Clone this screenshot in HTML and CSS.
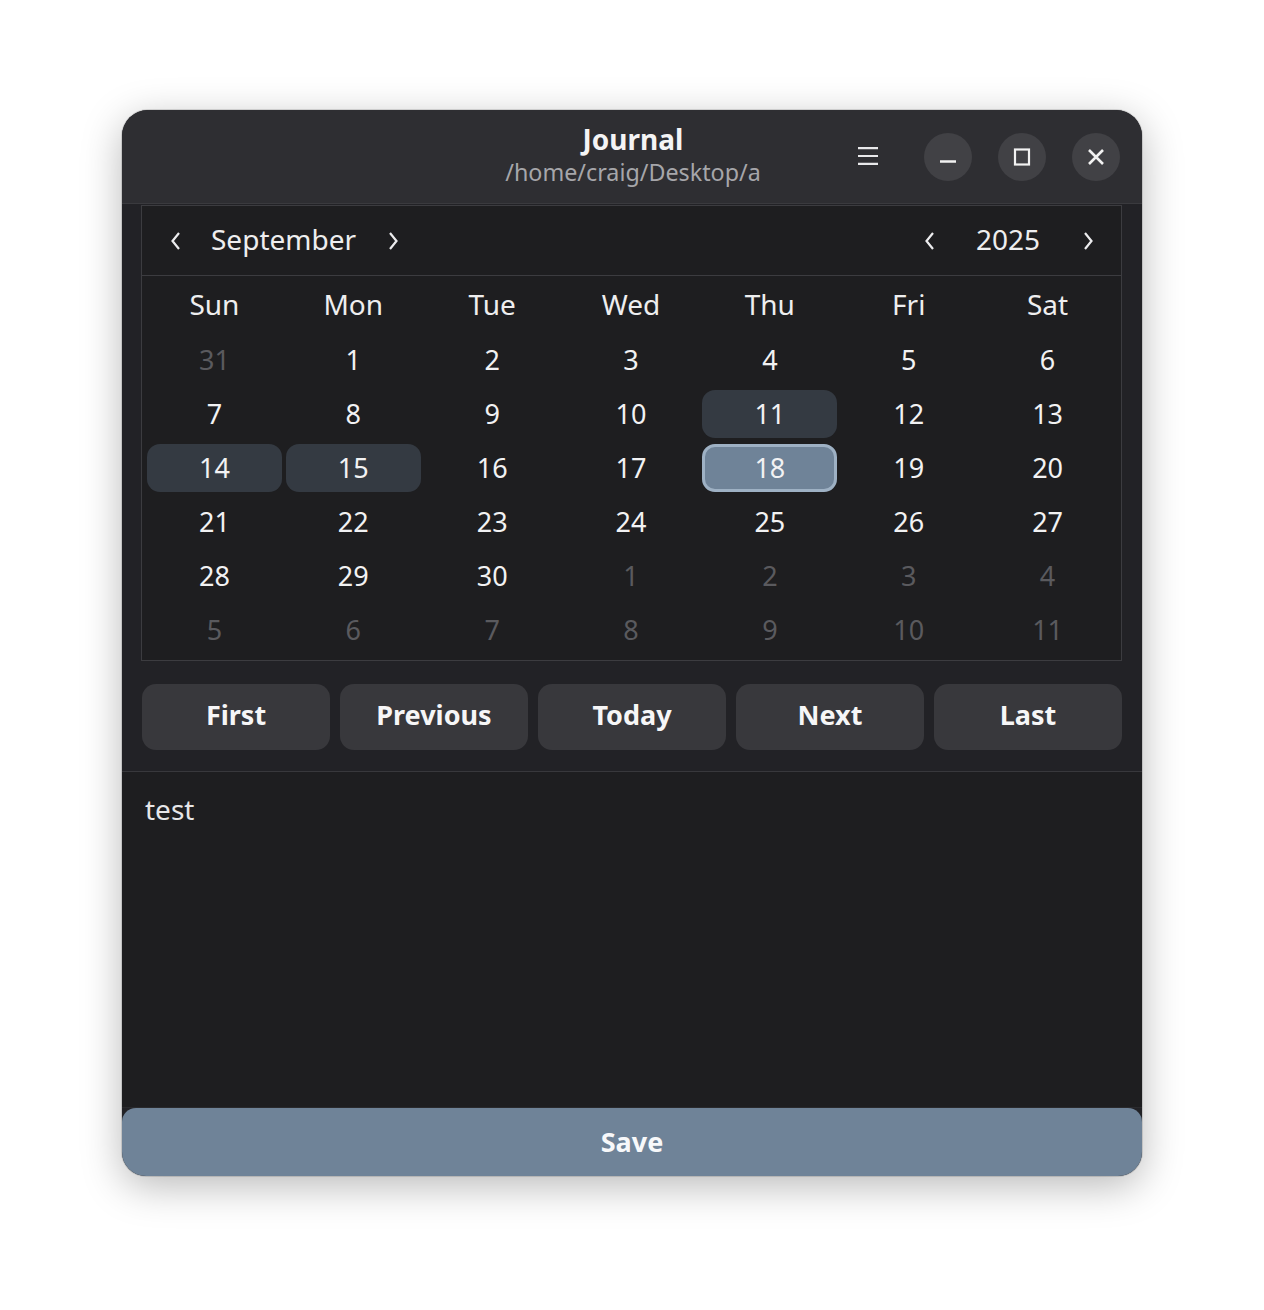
FILE: index.html
```html
<!DOCTYPE html>
<html lang="en">
<head>
<meta charset="utf-8">
<title>Journal</title>
<link rel="stylesheet" href="styles.css">
</head>
<body>
<div class="window">
  <header class="headerbar">
    <div class="hb-side"></div>
    <div class="hb-title">
      <div class="title">Journal</div>
      <div class="subtitle">/home/craig/Desktop/a</div>
    </div>
    <div class="hb-side hb-right">
      <button class="menu-btn" aria-label="Menu">
        <svg width="22" height="20" viewBox="0 0 22 20"><path d="M1 2.2H21M1 10H21M1 17.8H21" stroke="#e8e8ea" stroke-width="2.2" fill="none"/></svg>
      </button>
      <button class="wbtn" aria-label="Minimize">
        <svg width="18" height="18" viewBox="0 0 18 18"><path d="M1 13.5H17" stroke="#f2f2f2" stroke-width="2.6" fill="none"/></svg>
      </button>
      <button class="wbtn" aria-label="Maximize">
        <svg width="18" height="18" viewBox="0 0 18 18"><rect x="2" y="1.5" width="14" height="15" stroke="#f2f2f2" stroke-width="2.2" fill="none"/></svg>
      </button>
      <button class="wbtn" aria-label="Close">
        <svg width="18" height="18" viewBox="0 0 18 18"><path d="M2 2L16 16M16 2L2 16" stroke="#f2f2f2" stroke-width="2.6" fill="none"/></svg>
      </button>
    </div>
  </header>

  <div class="content">
    <div class="calendar">
      <div class="cal-header">
        <button class="chev" aria-label="Previous month">
          <svg width="12" height="20" viewBox="0 0 12 20"><path d="M9 2L2.5 10L9 18" stroke="#ececee" stroke-width="2.2" fill="none"/></svg>
        </button>
        <span class="cal-label month">September</span>
        <button class="chev" aria-label="Next month">
          <svg width="12" height="20" viewBox="0 0 12 20"><path d="M3 2L9.5 10L3 18" stroke="#ececee" stroke-width="2.2" fill="none"/></svg>
        </button>
        <div class="spacer"></div>
        <button class="chev" aria-label="Previous year">
          <svg width="12" height="20" viewBox="0 0 12 20"><path d="M9 2L2.5 10L9 18" stroke="#ececee" stroke-width="2.2" fill="none"/></svg>
        </button>
        <span class="cal-label year">2025</span>
        <button class="chev" aria-label="Next year">
          <svg width="12" height="20" viewBox="0 0 12 20"><path d="M3 2L9.5 10L3 18" stroke="#ececee" stroke-width="2.2" fill="none"/></svg>
        </button>
      </div>
      <div class="cal-grid">
        <div class="dname">Sun</div><div class="dname">Mon</div><div class="dname">Tue</div><div class="dname">Wed</div><div class="dname">Thu</div><div class="dname">Fri</div><div class="dname">Sat</div>

        <div class="day other"><span>31</span></div><div class="day"><span>1</span></div><div class="day"><span>2</span></div><div class="day"><span>3</span></div><div class="day"><span>4</span></div><div class="day"><span>5</span></div><div class="day"><span>6</span></div>

        <div class="day"><span>7</span></div><div class="day"><span>8</span></div><div class="day"><span>9</span></div><div class="day"><span>10</span></div><div class="day marked"><span>11</span></div><div class="day"><span>12</span></div><div class="day"><span>13</span></div>

        <div class="day marked"><span>14</span></div><div class="day marked"><span>15</span></div><div class="day"><span>16</span></div><div class="day"><span>17</span></div><div class="day selected"><span>18</span></div><div class="day"><span>19</span></div><div class="day"><span>20</span></div>

        <div class="day"><span>21</span></div><div class="day"><span>22</span></div><div class="day"><span>23</span></div><div class="day"><span>24</span></div><div class="day"><span>25</span></div><div class="day"><span>26</span></div><div class="day"><span>27</span></div>

        <div class="day"><span>28</span></div><div class="day"><span>29</span></div><div class="day"><span>30</span></div><div class="day other"><span>1</span></div><div class="day other"><span>2</span></div><div class="day other"><span>3</span></div><div class="day other"><span>4</span></div>

        <div class="day other"><span>5</span></div><div class="day other"><span>6</span></div><div class="day other"><span>7</span></div><div class="day other"><span>8</span></div><div class="day other"><span>9</span></div><div class="day other"><span>10</span></div><div class="day other"><span>11</span></div>
      </div>
    </div>

    <div class="nav-row">
      <button class="nav-btn">First</button>
      <button class="nav-btn">Previous</button>
      <button class="nav-btn">Today</button>
      <button class="nav-btn">Next</button>
      <button class="nav-btn">Last</button>
    </div>
  </div>

  <div class="editor">test</div>

  <button class="save-btn">Save</button>
</div>
</body>
</html>
```

FILE: styles.css
```css
* {
  box-sizing: border-box;
}

html, body {
  margin: 0;
  padding: 0;
  background: #ffffff;
}

body {
  font-family: "Noto Sans", "Open Sans", sans-serif;
  color: #ffffff;
  padding-top: 110px;
  display: flex;
  justify-content: center;
  min-height: 1310px;
}

button {
  font-family: inherit;
  color: inherit;
  border: none;
  background: none;
  padding: 0;
  margin: 0;
  cursor: default;
}

.window {
  width: 1020px;
  height: 1066px;
  border-radius: 26px 26px 24px 24px;
  overflow: hidden;
  background: #222226;
  display: flex;
  flex-direction: column;
  box-shadow: 0 10px 40px rgba(0, 0, 0, 0.28), 0 0 0 1px rgba(0, 0, 0, 0.12);
}

/* Header bar */
.headerbar {
  height: 94px;
  flex: none;
  background: #2e2e32;
  border-bottom: 1px solid #3a3a3e;
  display: grid;
  grid-template-columns: 1fr auto 1fr;
  align-items: center;
}

.hb-title {
  display: flex;
  flex-direction: column;
  align-items: center;
  padding-left: 2px;
  margin-top: -3px;
}

.title {
  font-weight: 700;
  font-size: 28px;
  line-height: 34px;
  color: #f4f4f5;
}

.subtitle {
  font-size: 23.3px;
  line-height: 32px;
  color: #a6a6aa;
}

.hb-right {
  display: flex;
  justify-content: flex-end;
  align-items: center;
  padding-right: 22px;
  gap: 26px;
}

.menu-btn {
  width: 48px;
  height: 48px;
  display: flex;
  align-items: center;
  justify-content: center;
  margin-right: 6px;
  margin-top: -2px;
}

.wbtn {
  width: 48px;
  height: 48px;
  border-radius: 50%;
  background: #414145;
  display: flex;
  align-items: center;
  justify-content: center;
}

/* Content */
.content {
  flex: none;
  padding: 1px 20px 21px 19px;
  border-bottom: 1px solid #38383c;
}

.calendar {
  background: #1e1e20;
  border: 1px solid #3c3c40;
}

.cal-header {
  height: 70px;
  display: flex;
  align-items: center;
  padding: 0 9px 0 10px;
  border-bottom: 1px solid #3c3c40;
  font-size: 28px;
  color: #eeeeef;
}

.chev {
  width: 48px;
  height: 48px;
  display: flex;
  align-items: center;
  justify-content: center;
}

.cal-label {
  line-height: 40px;
  padding-bottom: 4px;
}

.cal-label.month {
  margin: 0 13px 0 11px;
}

.cal-label.year {
  margin: 0 24px 0 22px;
}

.spacer {
  flex: 1;
}

.cal-grid {
  display: grid;
  grid-template-columns: repeat(7, 1fr);
  grid-template-rows: 57px repeat(6, 54px);
  padding: 0 4px 3px 3px;
}

.dname {
  display: flex;
  align-items: center;
  justify-content: center;
  font-size: 28px;
  color: #eeeeef;
  padding-bottom: 1px;
}

.day {
  display: flex;
  padding: 3px 2px;
}

.day span {
  flex: 1;
  display: flex;
  align-items: center;
  justify-content: center;
  border-radius: 13px;
  font-size: 27px;
  color: #f2f2f3;
  border: 2px solid transparent;
  padding-bottom: 2px;
}

.day.other span {
  color: #5a5a5e;
}

.day.marked span {
  background: #343a42;
}

.day.selected span {
  background: #6f8398;
  border: 3px solid #9eb1c4;
}

/* Navigation buttons */
.nav-row {
  display: flex;
  gap: 10px;
  margin-top: 23px;
  margin-left: 1px;
}

.nav-btn {
  flex: 1;
  height: 66px;
  border-radius: 14px;
  background: #38383c;
  font-weight: 700;
  font-size: 27px;
  color: #f6f6f7;
  padding-bottom: 5px;
}

/* Editor */
.editor {
  flex: 1;
  background: #1e1e20;
  padding: 17px 23px;
  font-size: 28px;
  line-height: 40px;
  color: #e6e6e8;
  border-bottom: 1px solid #2a2a2d;
}

/* Save */
.save-btn {
  flex: none;
  height: 68px;
  background: #6f8398;
  border-radius: 14px 14px 0 0;
  font-weight: 700;
  font-size: 27px;
  color: #f7f8fa;
  padding-bottom: 2px;
}
```
